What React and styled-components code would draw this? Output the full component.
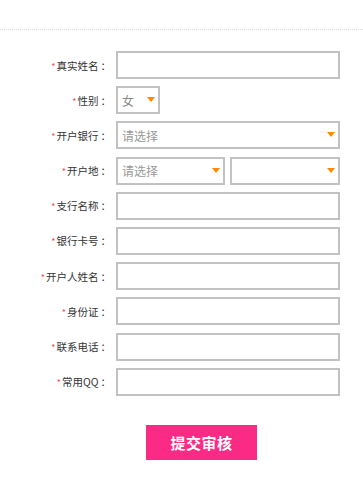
import styled, { createGlobalStyle } from "styled-components";

const GlobalStyle = createGlobalStyle`
  body {
    margin: 0;
    background: #fff;
    font-family: "Noto Sans CJK SC", "Liberation Sans", sans-serif;
  }
`;

const fields = [
  { label: "真实姓名", type: "input" },
  { label: "性别", type: "gender" },
  { label: "开户银行", type: "bank" },
  { label: "开户地", type: "area" },
  { label: "支行名称", type: "input" },
  { label: "银行卡号", type: "input" },
  { label: "开户人姓名", type: "input" },
  { label: "身份证", type: "input" },
  { label: "联系电话", type: "input" },
  { label: "常用QQ", type: "input" },
];

function Select({ width, value, placeholder }) {
  return (
    <SelectBox $width={width}>
      {value ? <Value>{value}</Value> : <Placeholder>{placeholder}</Placeholder>}
      <Arrow />
    </SelectBox>
  );
}

function App() {
  const renderField = (item) => {
    if (item.type === "gender") return <Select width="44px" value="女" />;
    if (item.type === "bank") return <Select width="100%" placeholder="请选择" />;
    if (item.type === "area")
      return (
        <Pair>
          <Select width="109px" placeholder="请选择" />
          <Select width="110px" />
        </Pair>
      );
    return <TextInput />;
  };

  return (
    <Page>
      <GlobalStyle />
      <Header />
      <Form>
        {fields.map((item) => (
          <Row key={item.label}>
            <Label>
              <Star>*</Star>
              {item.label}
              <Colon>：</Colon>
            </Label>
            {renderField(item)}
          </Row>
        ))}
      </Form>
      <Footer>
        <SubmitButton>提交审核</SubmitButton>
      </Footer>
    </Page>
  );
}

const Page = styled.div`
  width: 363px;
  height: 480px;
  background: #fff;
`;

const Header = styled.div`
  height: 29px;
  border-bottom: 1px dotted #dcdcdc;
`;

const Form = styled.div`
  padding-top: 21px;
  display: flex;
  flex-direction: column;
  gap: 7.2px;
`;

const Row = styled.div`
  display: grid;
  grid-template-columns: 111px 224px;
  column-gap: 5px;
  align-items: center;
  height: 28px;
`;

const Label = styled.div`
  text-align: right;
  font-size: 10.5px;
  color: #333;
  white-space: nowrap;
`;

const Star = styled.span`
  color: #ee4d5a;
  font-size: 9px;
  margin-right: 1px;
`;

const Colon = styled.span`
  margin-left: 2px;
`;

const TextInput = styled.div`
  box-sizing: border-box;
  height: 28px;
  border: 2px solid #c2c2c2;
  background: #fff;
`;

const Pair = styled.div`
  display: flex;
  gap: 5px;
`;

const SelectBox = styled.div`
  position: relative;
  box-sizing: border-box;
  width: ${(p) => p.$width};
  height: 28px;
  border: 2px solid #c2c2c2;
  display: flex;
  align-items: center;
  padding-left: 4px;
  font-size: 12px;
`;

const Value = styled.span`
  color: #888;
`;

const Placeholder = styled.span`
  color: #999;
`;

const Arrow = styled.span`
  position: absolute;
  right: 3px;
  top: 9px;
  width: 0;
  height: 0;
  border-left: 4.5px solid transparent;
  border-right: 4.5px solid transparent;
  border-top: 5px solid #ff8a00;
`;

const Footer = styled.div`
  padding: 29px 0 0 146px;
`;

const SubmitButton = styled.button`
  width: 111px;
  height: 35px;
  border: none;
  background: #fb2a85;
  color: #fff;
  font-family: "Noto Sans CJK SC", sans-serif;
  font-size: 15px;
  font-weight: bold;
  letter-spacing: 0.5px;
  padding: 0;
`;

export default App;
